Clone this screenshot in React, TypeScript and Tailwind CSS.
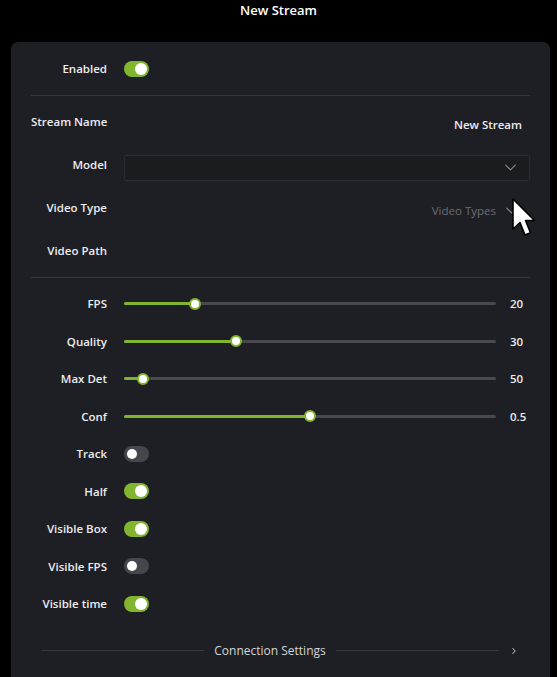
import { ChevronDown, ChevronRight } from "lucide-react";

function Toggle({ on }: { on: boolean }) {
  return (
    <span
      className={`flex h-[16px] w-[25px] items-center rounded-full ${
        on ? "justify-end bg-[#82b52f] pr-[2px]" : "justify-start bg-[#46474c] pl-[3px]"
      }`}
    >
      <span className={`rounded-full bg-white ${on ? "size-[12px]" : "size-[10px]"}`} />
    </span>
  );
}

function Slider({ pct }: { pct: number }) {
  return (
    <div className="relative h-[3px] flex-1 rounded-full bg-[#48494e]">
      <div className="h-full rounded-full bg-[#82b52f]" style={{ width: `${pct}%` }} />
      <span
        className="absolute top-1/2 size-[12px] -translate-x-1/2 -translate-y-1/2 rounded-full border-2 border-[#82b52f] bg-white"
        style={{ left: `${pct}%` }}
      />
    </div>
  );
}

const sliders = [
  { label: "FPS", pct: 19, value: "20" },
  { label: "Quality", pct: 30, value: "30" },
  { label: "Max Det", pct: 5, value: "50" },
  { label: "Conf", pct: 50, value: "0.5" },
];

const toggles = [
  { label: "Track", on: false },
  { label: "Half", on: true },
  { label: "Visible Box", on: true },
  { label: "Visible FPS", on: false },
  { label: "Visible time", on: true },
];

function Cursor() {
  return (
    <svg
      className="pointer-events-none absolute left-[511px] top-[198px]"
      width="26"
      height="40"
      viewBox="0 0 26 40"
    >
      <path
        d="M2 1 L2 31 L9 24.5 L14 37 L19.5 34.8 L14.5 22.5 L23.5 22.5 Z"
        fill="white"
        stroke="black"
        strokeWidth="1.6"
        strokeLinejoin="round"
      />
    </svg>
  );
}

export default function App() {
  return (
    <div
      className="relative h-[677px] w-[557px] overflow-hidden bg-black text-[#ececee]"
      style={{ fontFamily: '"Open Sans", "Liberation Sans", sans-serif' }}
    >
      <div className="flex h-[42px] justify-center pt-[2px] text-[13px] font-semibold leading-[16px] text-white">
        New Stream
      </div>

      <div className="ml-[11px] h-[660px] w-[539px] rounded-t-[7px] bg-[#1e1f24] px-[20px] pt-[16px] text-[11.5px] font-semibold">
        {/* enabled */}
        <div className="grid h-[22px] grid-cols-[76px_1fr] items-center gap-x-[17px]">
          <span className="text-right">Enabled</span>
          <Toggle on />
        </div>

        <div className="mt-[15px] h-px bg-[#36373c]" />

        {/* stream info */}
        <div className="pt-[7px]">
          <div className="grid h-[43px] grid-cols-[76px_1fr] items-center gap-x-[17px]">
            <span className="whitespace-nowrap pb-[6px] text-right">Stream Name</span>
            <span className="pr-[8px] text-right">New Stream</span>
          </div>
          <div className="grid h-[43px] grid-cols-[76px_1fr] items-center gap-x-[17px]">
            <span className="pb-[6px] text-right">Model</span>
            <div className="flex h-[26px] items-center justify-end rounded-[2px] border border-[#2b2c31] bg-[#1b1c20] pr-[9px]">
              <ChevronDown className="size-[19px] text-[#85868c]" strokeWidth={1.5} />
            </div>
          </div>
          <div className="grid h-[43px] grid-cols-[76px_1fr] items-center gap-x-[17px]">
            <span className="pb-[6px] text-right">Video Type</span>
            <div className="flex items-center justify-end gap-[6px] pr-[9px] font-medium text-[#6c6e74]">
              <span>Video Types</span>
              <ChevronDown className="size-[19px] text-[#85868c]" strokeWidth={1.5} />
            </div>
          </div>
          <div className="grid h-[43px] grid-cols-[76px_1fr] items-center gap-x-[17px]">
            <span className="pb-[6px] text-right">Video Path</span>
            <span />
          </div>
        </div>

        <div className="mt-[2px] h-px bg-[#36373c]" />

        {/* params */}
        <div className="pt-[7px]">
          {sliders.map((s) => (
            <div key={s.label} className="grid h-[37.5px] grid-cols-[76px_1fr] items-center gap-x-[17px]">
              <span className="text-right">{s.label}</span>
              <div className="flex items-center gap-[14px]">
                <Slider pct={s.pct} />
                <span className="w-[20px]">{s.value}</span>
              </div>
            </div>
          ))}
          {toggles.map((t) => (
            <div key={t.label} className="grid h-[37.5px] grid-cols-[76px_1fr] items-center gap-x-[17px]">
              <span className="whitespace-nowrap text-right">{t.label}</span>
              <Toggle on={t.on} />
            </div>
          ))}
        </div>

        {/* connection settings */}
        <div className="ml-[10px] mr-[11px] mt-[18px] flex h-[20px] items-center gap-[10px] text-[12px] font-normal text-[#d4d5d8]">
          <div className="h-px flex-1 bg-[#36373c]" />
          <span>Connection Settings</span>
          <div className="h-px flex-1 bg-[#36373c]" />
          <ChevronRight className="size-[10px] text-[#b8b9bd]" strokeWidth={2.5} />
        </div>
      </div>

      <Cursor />
    </div>
  );
}
